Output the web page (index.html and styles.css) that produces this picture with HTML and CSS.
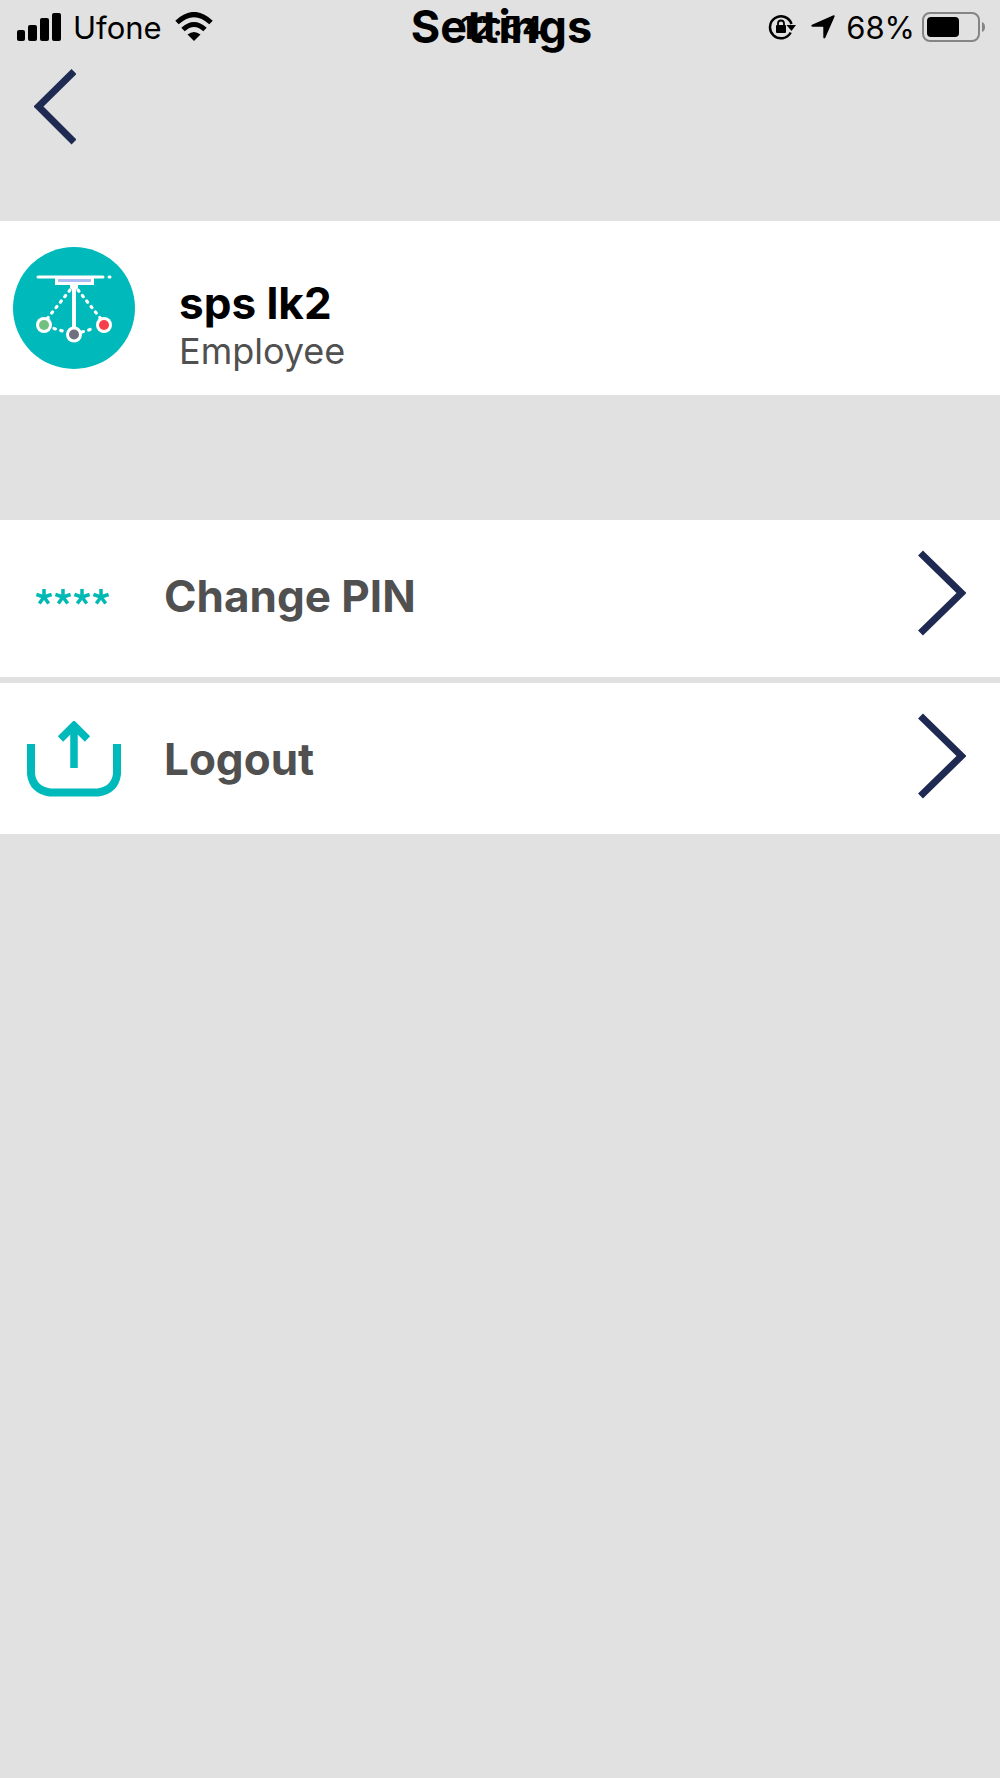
FILE: index.html
```html
<!DOCTYPE html>
<html lang="en">
<head>
<meta charset="utf-8">
<meta name="viewport" content="width=device-width, initial-scale=1">
<title>Settings</title>
<link rel="stylesheet" href="styles.css">
</head>
<body>
<header class="header">
  <div class="status">
    <div class="status-left">
      <svg class="signal" width="44" height="28" viewBox="0 0 44 28" aria-hidden="true">
        <rect x="0" y="17" width="8" height="11" rx="2"/><rect x="11" y="12" width="9" height="16" rx="2"/><rect x="23" y="5" width="9" height="23" rx="2"/><rect x="35" y="0" width="9" height="28" rx="2"/>
      </svg>
      <span>Ufone</span>
      <svg class="wifi" width="40" height="30" viewBox="0 0 40 30" aria-hidden="true">
        <path d="M3 10.500Q20 -5.500 37 10.500M9 17.500Q20 7.500 31 17.500" fill="none" stroke="#000" stroke-width="5"/>
        <path d="M13.500 22.500Q20 17.500 26.500 22.500L20 29Z"/>
      </svg>
    </div>
    <div class="status-center">
      <span class="time">12:54</span>
      <h1 class="title">Settings</h1>
    </div>
    <div class="status-right">
      <svg width="28" height="26" viewBox="0 0 28 26" aria-hidden="true">
        <path d="M22.700 18.500A11 11 0 1 1 23.500 10" fill="none" stroke="#000" stroke-width="2.500"/>
        <path d="M18.500 11H28L23.500 17Z"/>
        <rect x="8" y="11" width="10" height="8" rx="1"/>
        <path d="M10 12V9.500a3 3 0 0 1 6 0V12" fill="none" stroke="#000" stroke-width="1.800"/>
      </svg>
      <svg class="location" width="24" height="24" viewBox="0 0 24 24" aria-hidden="true">
        <path d="M22.500 .3 1 9.800Q-.5 11 1.200 11.700H11.500Q12.300 11.700 12.300 12.500V22.500Q13 24.500 14.300 22.800L23.600 1.500Q24 0 22.500 .3Z"/>
      </svg>
      <span>68%</span>
      <svg class="battery" width="64" height="30" viewBox="0 0 64 30" aria-hidden="true">
        <rect x="1" y="1" width="56" height="28" rx="7" fill="none" stroke="#858585" stroke-width="2"/>
        <rect x="5" y="5" width="32" height="20" rx="4"/>
        <path d="M60 10Q63 11 63 15T60 20Z" fill="#858585"/>
      </svg>
    </div>
  </div>
  <button class="back" type="button" aria-label="Back">
    <svg width="42" height="76" viewBox="0 0 42 76" aria-hidden="true"><path d="M40 2.500 4.500 37.500 40 73"/></svg>
  </button>
</header>
<main>
  <section class="profile">
    <svg class="avatar" width="122" height="122" viewBox="0 0 122 122" aria-hidden="true">
      <circle cx="61" cy="61" r="61" fill="#00b9ba"/>
      <g fill="none" stroke="#fff" stroke-linecap="round">
        <path d="M25 30H90M96 30H97" stroke-width="3"/>
        <path d="M57 43 34 72M65 43 88 72M41 81.500 53 85M69 85 82 81" stroke-width="3.200" stroke-dasharray="1.500 5.500"/>
        <path d="M61 38V80" stroke-width="4"/>
      </g>
      <rect x="42" y="30" width="39" height="8" fill="#fff"/>
      <rect x="45" y="32" width="33" height="3" fill="#aebcf5"/>
      <path d="M57 38H65V41L61 44 57 41Z" fill="#fff"/>
      <g fill="#fff"><circle cx="31" cy="78" r="8"/><circle cx="61" cy="87.500" r="8"/><circle cx="91" cy="78" r="8"/></g>
      <circle cx="31" cy="78" r="5" fill="#72c080"/><circle cx="61" cy="87.500" r="5" fill="#6f7180"/><circle cx="91" cy="78" r="5" fill="#f73f4b"/>
    </svg>
    <div class="identity">
      <h2 class="name">sps lk2</h2>
      <p class="role">Employee</p>
    </div>
  </section>
  <nav class="menu" aria-label="Settings">
    <button class="row" type="button">
      <svg class="row-icon" width="96" height="76" viewBox="0 0 96 76" aria-hidden="true">
        <defs><path id="star" d="M0 0V-8M0 0 7.600 -2.500M0 0 4.700 6.500M0 0-4.700 6.500M0 0-7.600 -2.500" fill="none" stroke="#00b9b4" stroke-width="3.500"/></defs>
        <use href="#star" x="18" y="39"/><use href="#star" x="37" y="39"/><use href="#star" x="56" y="39"/><use href="#star" x="75" y="39"/>
      </svg>
      <span class="label">Change PIN</span>
      <svg class="chevron" width="48" height="86" viewBox="0 0 48 86" aria-hidden="true"><path d="M2.500 3 43.500 43 2.500 83"/></svg>
    </button>
    <button class="row" type="button">
      <svg class="row-icon" width="96" height="76" viewBox="0 0 96 76" fill="none" stroke="#00b9ba" aria-hidden="true">
        <path d="M5 23V53Q7 69 24 71.500H72Q89 69 91 53V23" stroke-width="8"/>
        <path d="M48 47V6M34.500 18 48 4.500 61.500 18" stroke-width="7.500"/>
      </svg>
      <span class="label">Logout</span>
      <svg class="chevron" width="48" height="86" viewBox="0 0 48 86" aria-hidden="true"><path d="M2.500 3 43.500 43 2.500 83"/></svg>
    </button>
  </nav>
</main>
</body>
</html>
```
FILE: styles.css
```css
* { box-sizing: border-box; }
body {
  margin: 0;
  min-height: 100vh;
  background: #e1e1e1;
  color: #000;
  font-family: Inter, "Liberation Sans", sans-serif;
}
h1, h2, p { margin: 0; }
svg { display: block; flex: none; }
button { border: 0; padding: 0; background: none; font: inherit; color: inherit; text-align: left; cursor: pointer; }

.header { padding-bottom: 76px; }
.status {
  display: grid;
  grid-template-columns: 1fr auto 1fr;
  align-items: center;
  height: 54px;
  padding: 0 14px 0 17px;
  font-size: 31px;
}
.status-left, .status-right { display: flex; align-items: center; }
.status-left { gap: 12px; }
.status-right { justify-content: flex-end; gap: 7px; }
.location { margin: 0 4px 0 8px; }
.status-center { display: grid; place-items: center; }
.status-center > * { grid-area: 1 / 1; }
.time { font-weight: 600; }
.title { font-size: 45px; line-height: 54px; font-weight: 700; }

.back { display: block; margin: 15px 0 0 34px; }
.back path, .chevron path { fill: none; stroke: #1f2a52; stroke-width: 7; }

.profile {
  display: flex;
  align-items: flex-start;
  gap: 44px;
  padding: 26px 13px 20px;
  background: #fff;
}
.identity { padding-top: 32px; }
.name { font-size: 44px; line-height: 48px; }
.role { font-size: 36px; line-height: 48px; color: #505050; }

.menu { display: grid; gap: 6px; margin-top: 125px; }
.row {
  display: flex;
  align-items: center;
  width: 100%;
  padding: 30px 34px 35px 26px;
  background: #fff;
}
.row:first-child { padding-bottom: 41px; }
.row-icon { margin-top: 6px; }
.label { flex: 1; padding: 6px 0 0 42px; font-size: 44px; line-height: 54px; font-weight: 700; color: #505050; }
```
